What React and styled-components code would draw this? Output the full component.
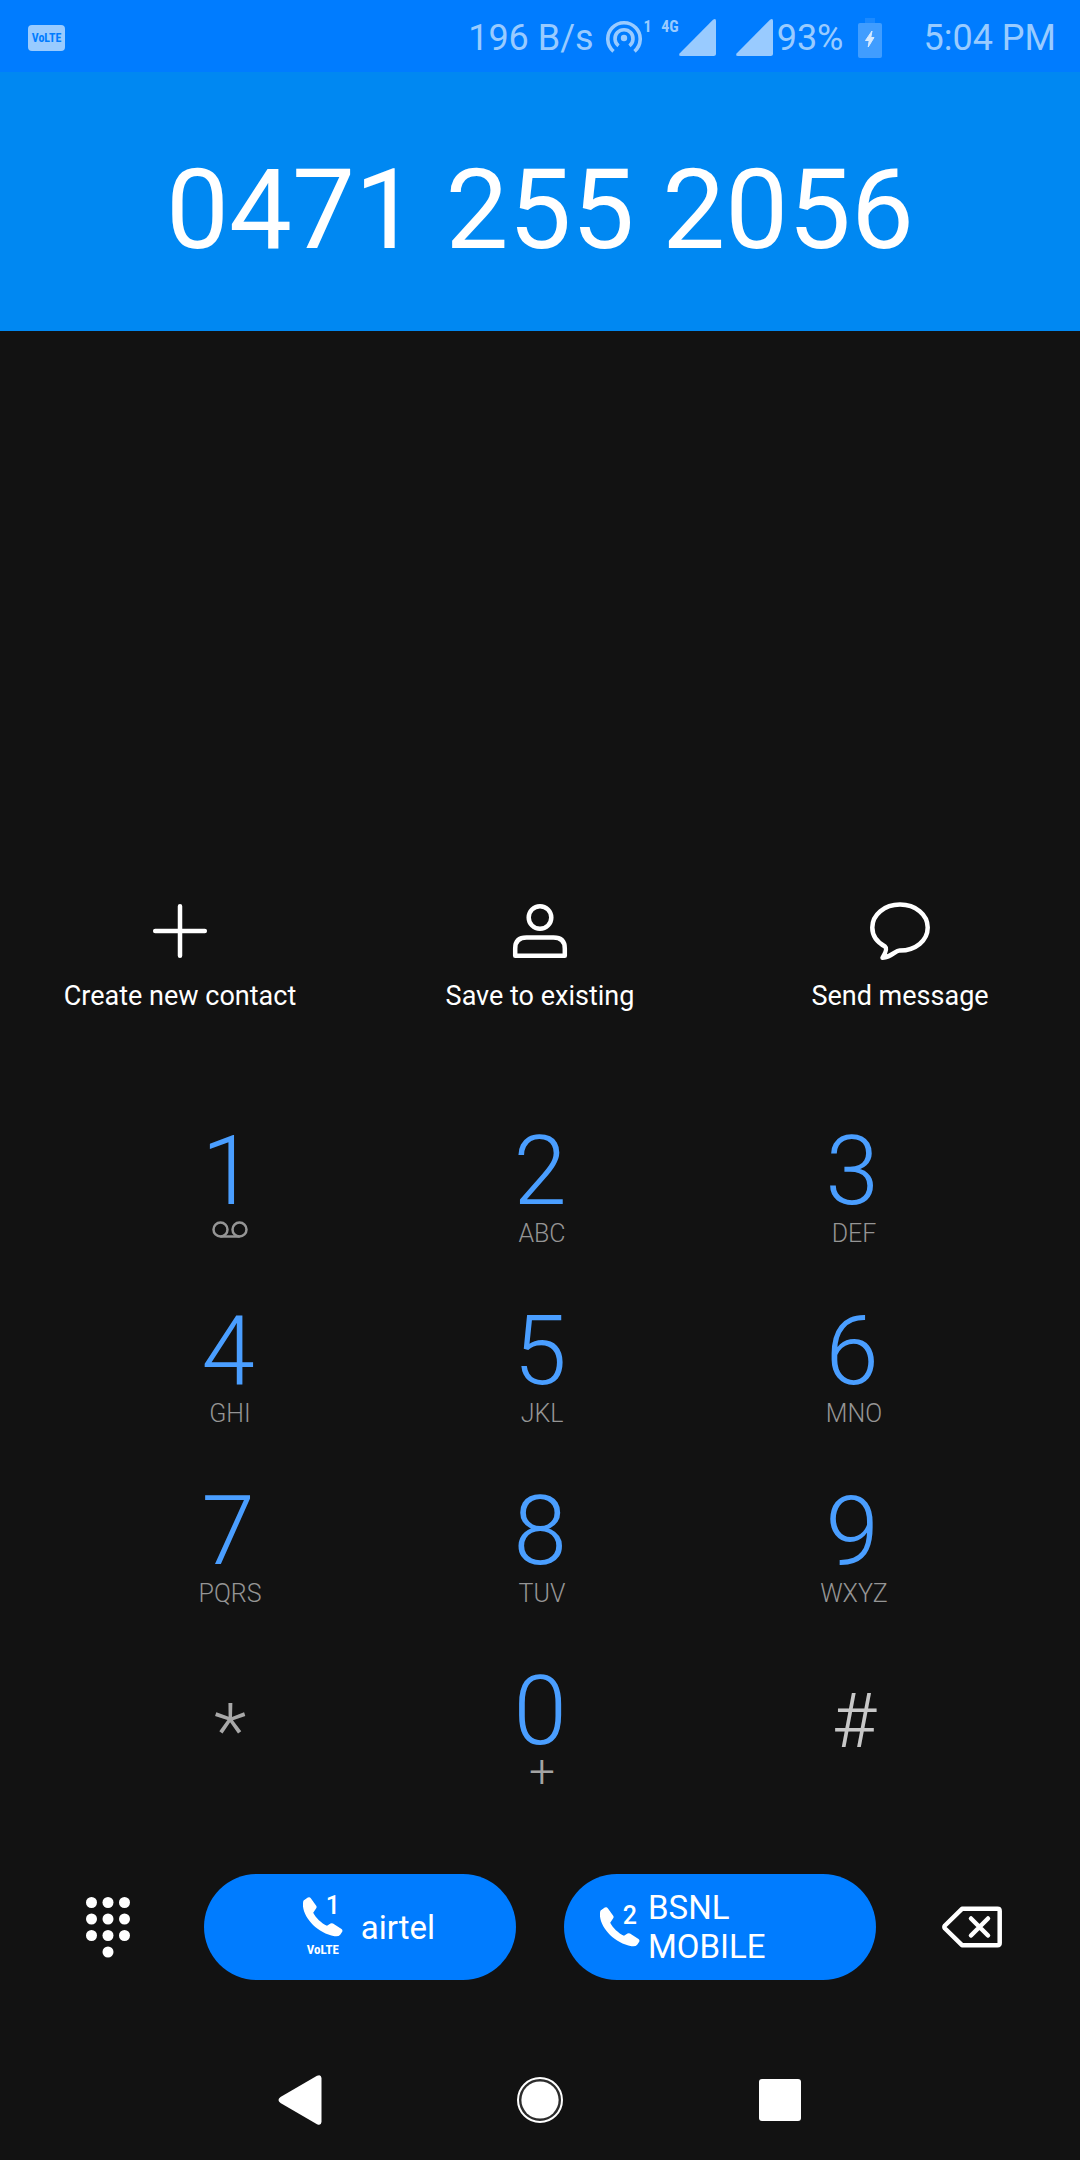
import React from "react";
import styled, { createGlobalStyle } from "styled-components";

const color = {
  ink: "#121212",
  blue: "#007cff",
  header: "#0088f2",
  digit: "#4a9eff",
  status: "#99cbff",
};

const narrow = `"Roboto Condensed", "Liberation Sans Narrow", "Noto Sans CJK JP", sans-serif`;

const GlobalStyle = createGlobalStyle`
  *, *::before, *::after { box-sizing: border-box; }
  body {
    margin: 0;
    background: ${color.ink};
    color: #fff;
    font-family: Roboto, "Noto Sans", sans-serif;
  }
  button, input { font: inherit; color: inherit; }
  svg { display: block; flex: none; }
`;

const Screen = styled.div`
  display: flex;
  flex-direction: column;
  min-height: 100vh;
`;

const StatusBar = styled.div`
  display: flex;
  align-items: center;
  height: 72px;
  padding: 3px 24px 0 28px;
  background: ${color.blue};
  color: ${color.status};
  font-size: 36px;
  line-height: 42px;
  white-space: nowrap;
`;

const Badge = styled.span`
  display: flex;
  align-items: center;
  justify-content: center;
  width: 37px;
  height: 26px;
  margin-right: auto;
  border-radius: 4px;
  background: ${color.status};
  color: ${color.blue};
  font: bold 12px/26px ${narrow};
`;

const StatusItem = styled.span`
  display: flex;
  align-items: center;
  margin-left: ${(p) => p.$gap || 0}px;
`;

const SignalGroup = styled.span`
  display: flex;
  align-items: center;
  height: 38px;
`;

const Tag = styled.span`
  align-self: flex-start;
  width: ${(p) => p.$width}px;
  font: bold 16px/16px ${narrow};
  text-align: right;
`;

const Header = styled.header`
  padding: 72px 24px 55px;
  background: ${color.header};
`;

const NumberField = styled.input`
  display: block;
  width: 100%;
  height: 132px;
  padding: 0;
  border: 0;
  outline: 0;
  background: none;
  font-size: 112px;
  line-height: 132px;
  text-align: center;
`;

const Results = styled.main`
  flex: 1;
`;

const Actions = styled.div`
  display: grid;
  grid-template-columns: repeat(3, 1fr);
  padding-bottom: 108px;
`;

const PlainButton = styled.button`
  display: flex;
  align-items: center;
  padding: 0;
  border: 0;
  background: none;
  cursor: pointer;
`;

const Action = styled(PlainButton)`
  flex-direction: column;
  gap: 16px;
  font-size: 27px;
  line-height: 38px;
`;

const Keypad = styled.div`
  display: grid;
  grid-template-columns: repeat(3, 1fr);
  grid-auto-rows: 180px;
  padding: 0 72px;
`;

const Key = styled(PlainButton)`
  flex-direction: column;
  font-weight: 300;
`;

const Digit = styled.span`
  color: ${color.digit};
  font-size: 96px;
  line-height: 96px;
`;

const Letters = styled.span`
  padding-left: 4px;
  color: #959595;
  font-size: 25px;
  line-height: 30px;
`;

const PlusSign = styled.span`
  padding-left: 4px;
  color: #a4a4a4;
  font-size: 46px;
  line-height: 24px;
`;

const Symbol = styled.span`
  padding-left: 4px;
  color: ${(p) => p.$tone};
  font-size: 76px;
  line-height: ${(p) => p.$line}px;
`;

const Voicemail = styled.span`
  padding: 2px 0 0 4px;
`;

const CallBar = styled.div`
  display: flex;
  align-items: center;
  padding: 31px 12px 60px;
`;

const SideButton = styled(PlainButton)`
  flex: none;
  justify-content: center;
  width: 192px;
  height: 106px;
`;

const CallButtons = styled.div`
  display: grid;
  flex: 1;
  grid-template-columns: 1fr 1fr;
  gap: 48px;
`;

const CallButton = styled(PlainButton)`
  justify-content: center;
  height: 106px;
  padding: 0 36px;
  border-radius: 53px;
  background: ${color.blue};
  font-size: 33px;
  line-height: 39px;
  text-align: left;
`;

const CarrierName = styled.span`
  flex: ${(p) => (p.$fill ? 1 : "none")};
`;

const SimIcon = styled.span`
  display: grid;
  flex: none;
  justify-items: ${(p) => p.$align};
  width: ${(p) => p.$width}px;
`;

const Handset = styled.span`
  position: relative;
  display: block;
`;

const SimNumber = styled.span`
  position: absolute;
  top: 0;
  right: 3px;
  font-size: 25px;
  font-weight: 500;
  line-height: 18px;
`;

const VolteLabel = styled.span`
  margin-top: 5px;
  font: bold 13px/16px ${narrow};
`;

const NavBar = styled.nav`
  display: flex;
  justify-content: center;
  height: 120px;
`;

const NavButton = styled(PlainButton)`
  justify-content: center;
  width: 240px;
`;

const Signal = () => (
  <svg width="37" height="37" viewBox="0 0 37 37" fill="currentColor" aria-hidden="true">
    <path d="M34 .8Q37-1.200 37 2V34.500Q37 37 34.500 37H2Q-1 37 .8 34.200Z" />
  </svg>
);

const Hotspot = () => (
  <svg width="36" height="36" viewBox="0 0 36 36" fill="none" stroke="currentColor" strokeWidth="3.600" aria-hidden="true">
    <circle cx="18" cy="18" r="3.200" fill="currentColor" stroke="none" />
    <path d="M12.500 25.800A9 9 0 1 1 23.500 25.800" />
    <path d="M7.500 31.300A16.200 16.200 0 1 1 28.500 31.300" />
  </svg>
);

const Battery = () => (
  <svg width="24" height="40" viewBox="0 0 24 40" aria-hidden="true">
    <rect x="7" y="0" width="10" height="5" fill="#1a89ff" />
    <rect x="0" y="5" width="24" height="35" rx="2" fill="#409dff" />
    <path d="M14 13L7.500 22.500H11.200L10.200 29L16 19.500H12.800Z" fill="#d6eaff" stroke="#d6eaff" strokeLinejoin="round" />
  </svg>
);

const PlusIcon = () => (
  <svg width="60" height="60" viewBox="0 0 60 60" fill="none" stroke="#fff" strokeWidth="4.500" strokeLinecap="round" aria-hidden="true">
    <path d="M30 5.200V54.800M5.200 30H54.800" />
  </svg>
);

const PersonIcon = () => (
  <svg width="60" height="60" viewBox="0 0 60 60" fill="none" stroke="#fff" strokeWidth="4.500" strokeLinejoin="round" aria-hidden="true">
    <circle cx="30" cy="16.500" r="11.300" />
    <path d="M5.200 54.800V47.500Q5.200 36.600 16.500 36.600H43.500Q54.800 36.600 54.800 47.500V54.800Z" />
  </svg>
);

const BubbleIcon = () => (
  <svg width="60" height="60" viewBox="0 0 60 60" fill="none" stroke="#fff" strokeWidth="4.500" strokeLinejoin="round" aria-hidden="true">
    <path d="M30 3.600C45.500 3.600 57.700 13.500 57.700 26.500C57.700 39.600 45.500 49.500 30 49.500C25.500 48.800 23 55.500 12.500 56.800C14.500 53.500 17.500 47.500 15 45.500C7 41.200 2.300 34.500 2.300 26.500C2.300 13.500 14.500 3.600 30 3.600Z" />
  </svg>
);

const VoicemailIcon = () => (
  <svg width="36" height="17" viewBox="0 0 36 17" fill="none" stroke="#959595" strokeWidth="2.500" aria-hidden="true">
    <circle cx="8.500" cy="8.500" r="7" />
    <circle cx="27.500" cy="8.500" r="7" />
    <path d="M8.500 15.500H27.500" />
  </svg>
);

const HandsetIcon = () => (
  <svg width="40" height="40" viewBox="0 0 40 40" fill="currentColor" aria-hidden="true">
    <path d="M.6 3.600L4.800 .6Q6.600-.5 7.800 1.200L13.200 8.800Q14 10 13.200 11.300L10.200 15.700C12.500 20.500 18.500 26.300 24 28.700L27.500 26.500Q28.800 25.800 30 26.600L38.500 31.900Q40 33 39.200 34.800L37.200 37.800Q35.600 39.800 31.500 39.200C13.500 36.500-1.500 18.500 0 6Q.1 4.300 .6 3.600Z" />
  </svg>
);

const DialpadIcon = () => (
  <svg width="44" height="61" viewBox="0 0 44 61" fill="#fff" aria-hidden="true">
    {[5.5, 22, 38.5].map((x) =>
      [5.5, 22, 38.5].map((y) => <circle key={`${x}-${y}`} cx={x} cy={y} r="5.500" />)
    )}
    <circle cx="22" cy="55" r="5.500" />
  </svg>
);

const BackspaceIcon = () => (
  <svg width="60" height="42" viewBox="0 0 60 42" fill="none" stroke="#fff" strokeWidth="4.500" strokeLinejoin="round" strokeLinecap="round" aria-hidden="true">
    <path d="M20 2.800H55.500Q57.700 2.800 57.700 5V37Q57.700 39.200 55.500 39.200H20L3 22.500Q1.800 21 3 19.500Z" />
    <path d="M29 12.500L46 29.500M46 12.500L29 29.500" />
  </svg>
);

const BackIcon = () => (
  <svg width="44" height="50" viewBox="0 0 44 50" fill="#fff" aria-hidden="true">
    <path d="M39 .8Q43-1.200 43.500 3V47Q43 51.200 39 49.200L2.500 28Q-1.500 25 2.500 22Z" />
  </svg>
);

const HomeIcon = () => (
  <svg width="48" height="48" viewBox="0 0 48 48" aria-hidden="true">
    <circle cx="24" cy="24" r="22" fill="#2c2c2c" stroke="#fff" strokeWidth="2" />
    <circle cx="24" cy="24" r="18.600" fill="#fff" />
  </svg>
);

const RecentsIcon = () => (
  <svg width="42" height="42" viewBox="0 0 42 42" aria-hidden="true">
    <rect width="42" height="42" rx="3" fill="#fff" />
  </svg>
);

const actions = [
  { label: "Create new contact", Icon: PlusIcon },
  { label: "Save to existing", Icon: PersonIcon },
  { label: "Send message", Icon: BubbleIcon },
];

const keys = [
  { digit: "1", voicemail: true },
  { digit: "2", letters: "ABC" },
  { digit: "3", letters: "DEF" },
  { digit: "4", letters: "GHI" },
  { digit: "5", letters: "JKL" },
  { digit: "6", letters: "MNO" },
  { digit: "7", letters: "PQRS" },
  { digit: "8", letters: "TUV" },
  { digit: "9", letters: "WXYZ" },
  { symbol: "*", tone: "#a8a8a8", line: 136 },
  { digit: "0", plus: true },
  { symbol: "#", tone: "#c8c8c8", line: 116 },
];

export default function App() {
  return (
    <Screen>
      <GlobalStyle />
      <StatusBar>
        <Badge>VoLTE</Badge>
        <span>196 B/s</span>
        <StatusItem $gap={12}><Hotspot /></StatusItem>
        <SignalGroup>
          <Tag $width={10}>1</Tag>
          <Tag $width={27}>4G</Tag>
          <Signal />
        </SignalGroup>
        <StatusItem $gap={20}><Signal /></StatusItem>
        <StatusItem $gap={4}>93%</StatusItem>
        <StatusItem $gap={14}><Battery /></StatusItem>
        <StatusItem $gap={42}>5:04 PM</StatusItem>
      </StatusBar>
      <Header>
        <NumberField type="tel" aria-label="Phone number" defaultValue="0471 255 2056" />
      </Header>
      <Results />
      <Actions>
        {actions.map(({ label, Icon }) => (
          <Action key={label} type="button">
            <Icon />
            <span>{label}</span>
          </Action>
        ))}
      </Actions>
      <Keypad>
        {keys.map((k) => (
          <Key key={k.digit || k.symbol} type="button">
            {k.digit && <Digit>{k.digit}</Digit>}
            {k.letters && <Letters>{k.letters}</Letters>}
            {k.voicemail && <Voicemail><VoicemailIcon /></Voicemail>}
            {k.plus && <PlusSign>+</PlusSign>}
            {k.symbol && <Symbol $tone={k.tone} $line={k.line}>{k.symbol}</Symbol>}
          </Key>
        ))}
      </Keypad>
      <CallBar>
        <SideButton type="button" aria-label="Hide keypad"><DialpadIcon /></SideButton>
        <CallButtons>
          <CallButton type="button">
            <SimIcon $width={76} $align="center">
              <Handset><HandsetIcon /><SimNumber>1</SimNumber></Handset>
              <VolteLabel>VoLTE</VolteLabel>
            </SimIcon>
            <CarrierName>airtel</CarrierName>
          </CallButton>
          <CallButton type="button">
            <SimIcon $width={48} $align="start">
              <Handset><HandsetIcon /><SimNumber>2</SimNumber></Handset>
            </SimIcon>
            <CarrierName $fill>BSNL MOBILE</CarrierName>
          </CallButton>
        </CallButtons>
        <SideButton type="button" aria-label="Delete digit"><BackspaceIcon /></SideButton>
      </CallBar>
      <NavBar>
        <NavButton type="button" aria-label="Back"><BackIcon /></NavButton>
        <NavButton type="button" aria-label="Home"><HomeIcon /></NavButton>
        <NavButton type="button" aria-label="Recent apps"><RecentsIcon /></NavButton>
      </NavBar>
    </Screen>
  );
}
